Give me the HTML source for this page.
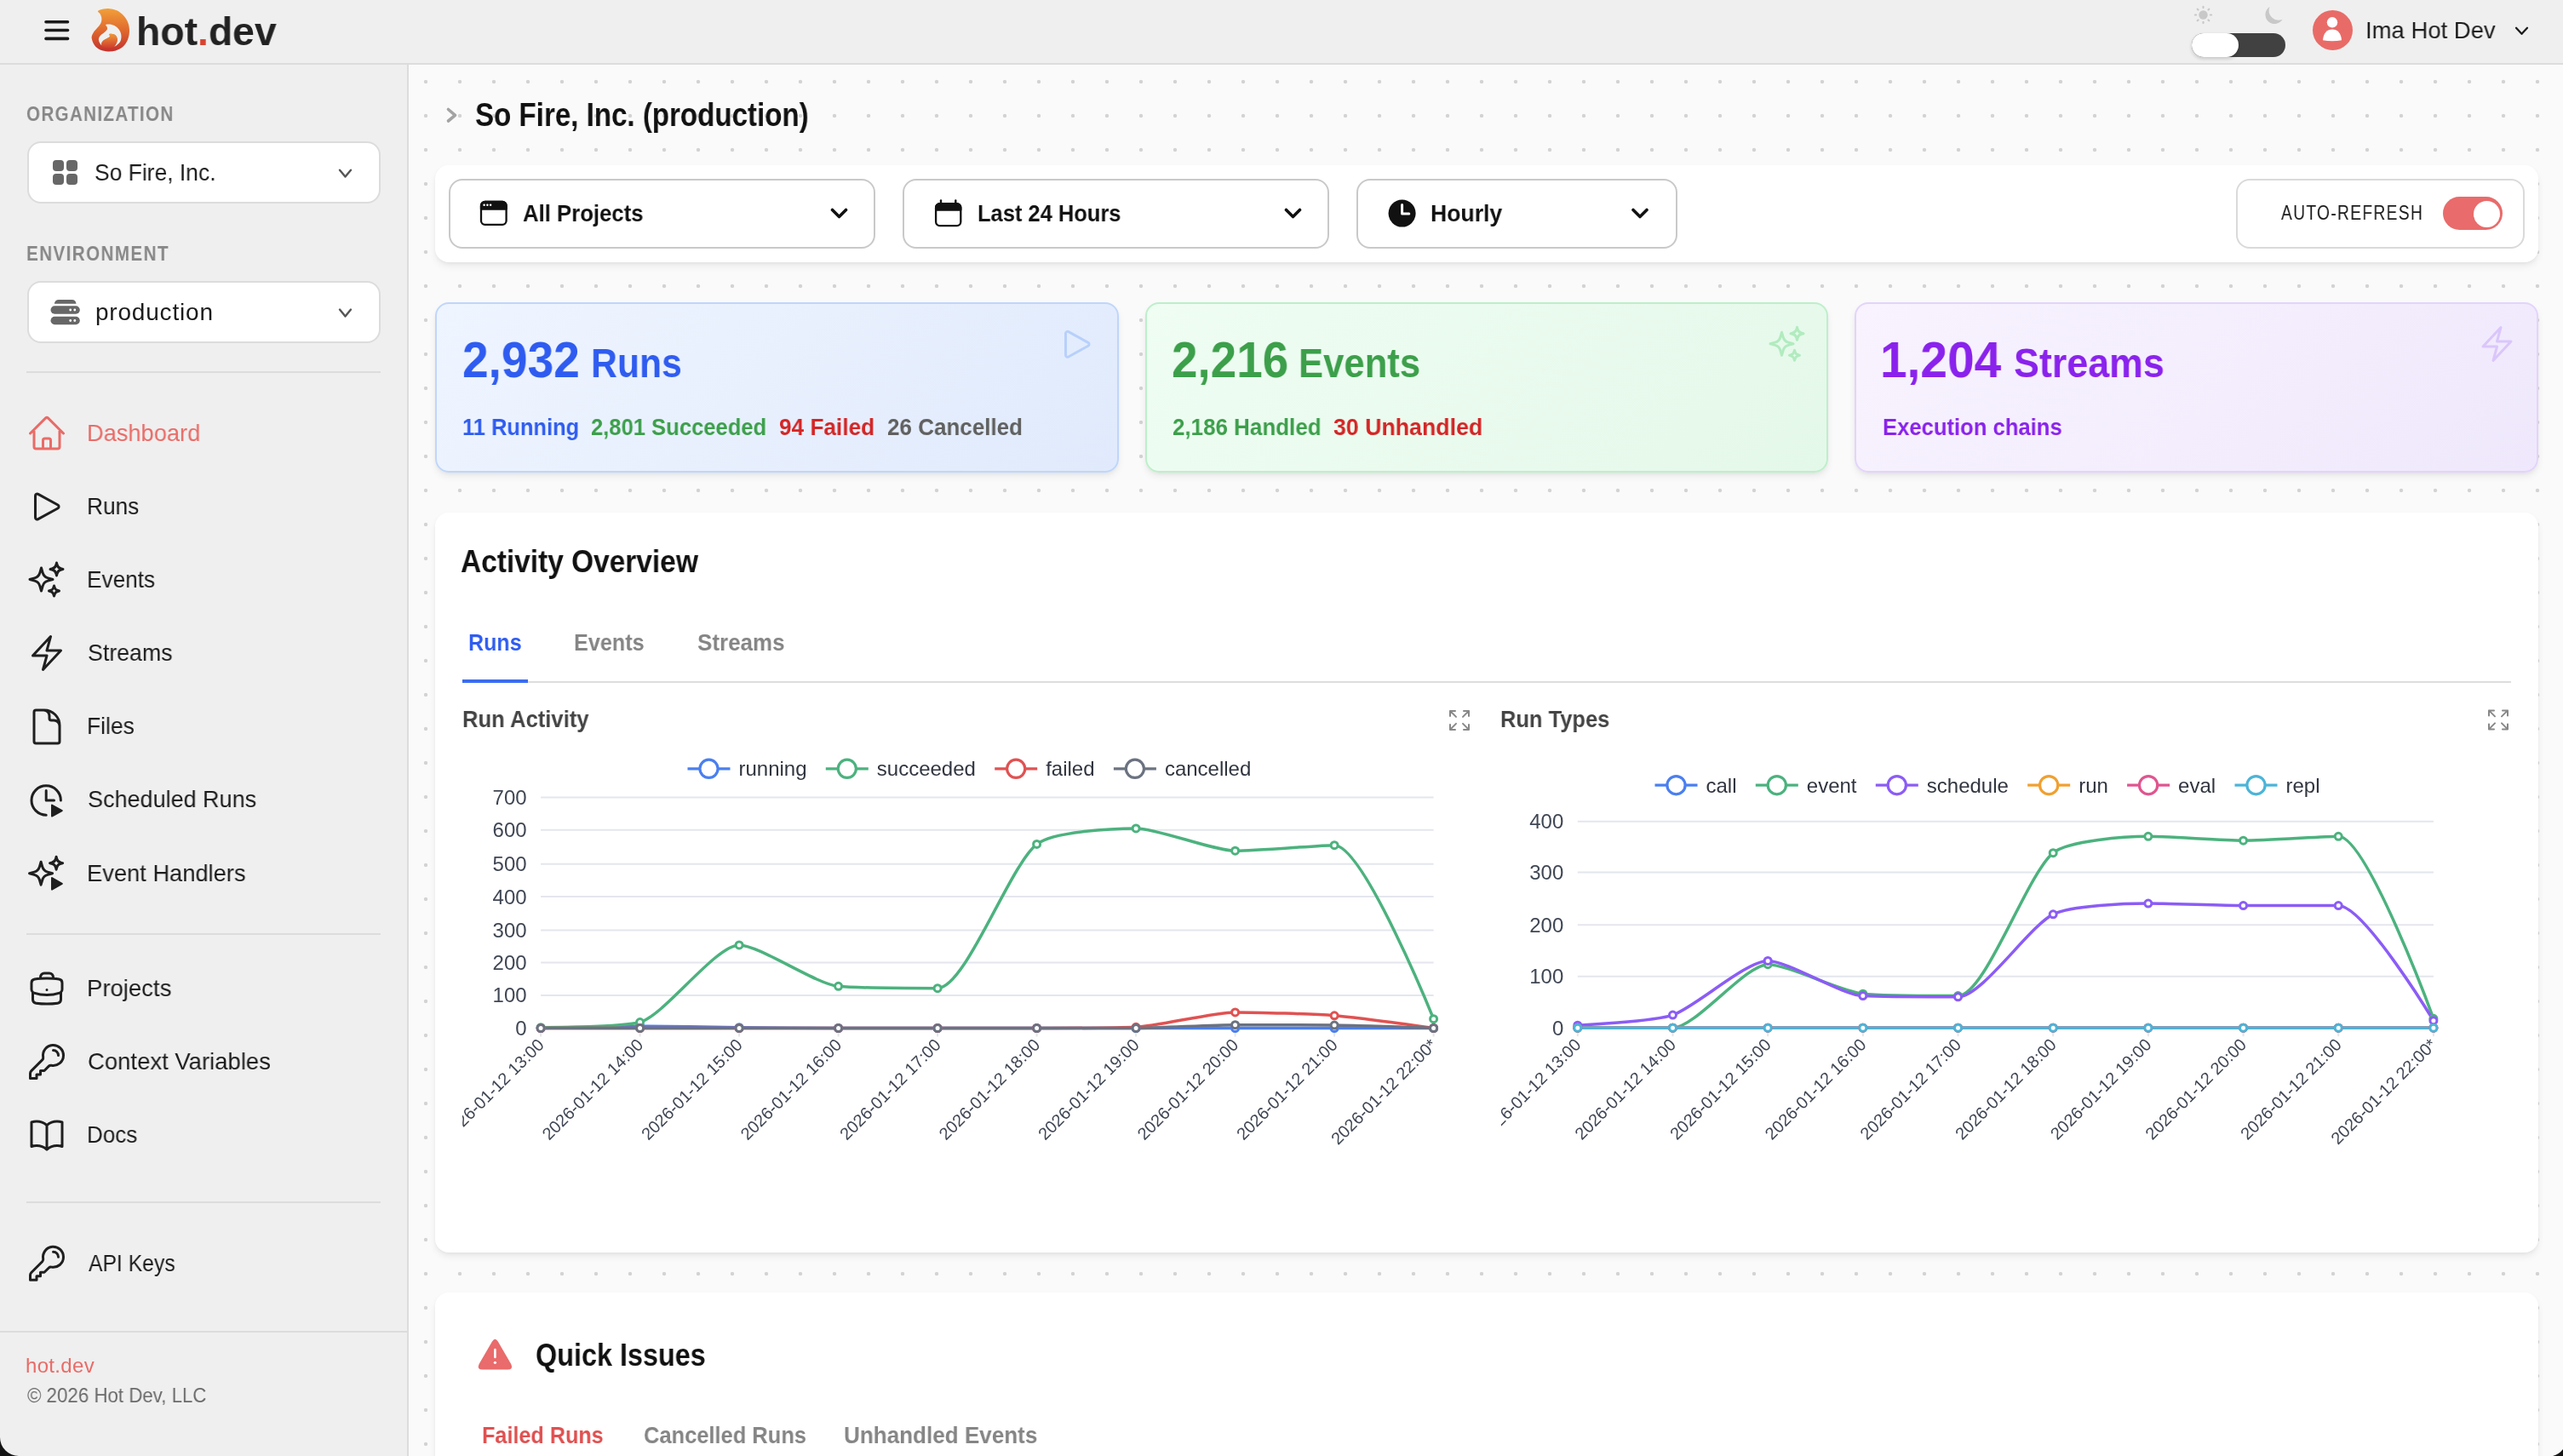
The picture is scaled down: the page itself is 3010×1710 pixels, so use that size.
<!DOCTYPE html>
<html><head><meta charset="utf-8"><title>hot.dev dashboard</title>
<style>
html,body{margin:0;padding:0;width:3010px;height:1710px;overflow:hidden;background:#f8f8f8;font-family:'Liberation Sans', sans-serif;}
.a{position:absolute;box-sizing:border-box;}
.t{position:absolute;white-space:nowrap;font-family:'Liberation Sans', sans-serif;will-change:transform;-webkit-font-smoothing:antialiased;}

#hdr{left:0;top:0;width:3010px;height:76px;background:#efefef;border-bottom:2px solid #dcdcdc;}
#side{left:0;top:76px;width:480px;height:1634px;background:#efefef;border-right:2px solid #dcdcdc;}
#main{left:480px;top:76px;width:2530px;height:1634px;background-color:#fafafa;
  background-image:radial-gradient(circle at 20px 20px,#d3d3d3 0,#d3d3d3 1.8px,rgba(211,211,211,0) 2.6px);background-size:40px 40px;}
.sel{background:#fff;border:2px solid #dcdcdc;border-radius:16px;}
.div{background:#dcdcdc;height:2px;}
.card{background:#fff;border-radius:16px;box-shadow:0 5px 10px -1px rgba(0,0,0,0.075),0 2px 4px -1px rgba(0,0,0,0.05);}
.tsel{background:#fff;border:2px solid #c9c9c9;border-radius:16px;}
.stat{border-radius:16px;border:2px solid;box-shadow:0 5px 10px -1px rgba(0,0,0,0.075),0 2px 4px -1px rgba(0,0,0,0.05);}

</style></head><body>
<div class="a" id="hdr"></div>
<div class="a" id="side"></div>
<div class="a" id="main"></div>
<div class="a sel" style="left:32px;top:166px;width:415px;height:73px;"></div>
<div class="a sel" style="left:32px;top:330px;width:415px;height:73px;"></div>
<div class="a div" style="left:31px;top:436px;width:416px;height:2px;"></div>
<div class="a div" style="left:31px;top:1096px;width:416px;height:2px;"></div>
<div class="a div" style="left:31px;top:1411px;width:416px;height:2px;"></div>
<div class="a " style="left:0px;top:1563px;width:478px;height:2px;background:#dcdcdc"></div>
<div class="a card" style="left:511px;top:194px;width:2470px;height:114px;"></div>
<div class="a tsel" style="left:527px;top:210px;width:501px;height:82px;"></div>
<div class="a tsel" style="left:1060px;top:210px;width:501px;height:82px;"></div>
<div class="a tsel" style="left:1593px;top:210px;width:377px;height:82px;"></div>
<div class="a tsel" style="left:2626px;top:210px;width:339px;height:82px;border-color:#dadada"></div>
<div class="a " style="left:2869px;top:231px;width:70px;height:39px;background:#e96b6b;border-radius:20px"></div>
<div class="a " style="left:2904.5px;top:235.5px;width:31.0px;height:31.0px;background:#fff;border-radius:50%"></div>
<div class="a stat" style="left:511px;top:355px;width:803px;height:200px;background:linear-gradient(135deg,#eff5ff 0%,#e0eafc 100%);border-color:#bfd6fb"></div>
<div class="a stat" style="left:1345px;top:355px;width:802px;height:200px;background:linear-gradient(135deg,#effdf3 0%,#e4f8e9 100%);border-color:#bdefca"></div>
<div class="a stat" style="left:2178px;top:355px;width:803px;height:200px;background:linear-gradient(135deg,#f8f3fe 0%,#efe8fc 100%);border-color:#e3d3fc"></div>
<div class="a card" style="left:511px;top:602px;width:2470px;height:869px;"></div>
<div class="a " style="left:543px;top:800px;width:2406px;height:2px;background:#dddddd"></div>
<div class="a " style="left:543px;top:798px;width:77px;height:4px;background:#3b6cf0"></div>
<div class="a card" style="left:511px;top:1518px;width:2470px;height:242px;"></div>
<div class="a " style="left:2574px;top:39px;width:110px;height:28px;background:#414141;border-radius:14px"></div>
<div class="a " style="left:2574px;top:39px;width:55px;height:28px;background:#fff;border-radius:14px;box-shadow:0 2px 4px rgba(0,0,0,0.18)"></div>
<div class="a " style="left:2716px;top:12px;width:47px;height:47px;background:#e96b67;border-radius:50%"></div>
<div class=t style="left:160.4px;top:13px;font-size:47px;line-height:47px;font-weight:700;color:#222222;letter-spacing:0.00px;transform:scaleX(0.9854);transform-origin:0 0;">hot<span style="color:#d8432f">.</span>dev</div>
<div class=t style="left:2777.6px;top:22px;font-size:28px;line-height:28px;font-weight:400;color:#1c1c1c;letter-spacing:0.00px;transform:scaleX(0.9817);transform-origin:0 0;">Ima Hot Dev</div>
<div class=t style="left:31.1px;top:122px;font-size:24px;line-height:24px;font-weight:700;color:#878787;letter-spacing:1.52px;transform:scaleX(0.8600);transform-origin:0 0;">ORGANIZATION</div>
<div class=t style="left:111.4px;top:189px;font-size:28px;line-height:28px;font-weight:400;color:#1c1c1c;letter-spacing:0.00px;transform:scaleX(0.9439);transform-origin:0 0;">So Fire, Inc.</div>
<div class=t style="left:30.7px;top:286px;font-size:24px;line-height:24px;font-weight:700;color:#878787;letter-spacing:1.62px;transform:scaleX(0.8600);transform-origin:0 0;">ENVIRONMENT</div>
<div class=t style="left:111.6px;top:353px;font-size:28px;line-height:28px;font-weight:400;color:#1c1c1c;letter-spacing:0.80px;">production</div>
<div class=t style="left:102.4px;top:495px;font-size:28px;line-height:28px;font-weight:400;color:#e96b67;letter-spacing:0.00px;transform:scaleX(0.9729);transform-origin:0 0;">Dashboard</div>
<div class=t style="left:102.4px;top:581px;font-size:28px;line-height:28px;font-weight:400;color:#1c1c1c;letter-spacing:0.00px;transform:scaleX(0.9387);transform-origin:0 0;">Runs</div>
<div class=t style="left:102.4px;top:667px;font-size:28px;line-height:28px;font-weight:400;color:#1c1c1c;letter-spacing:0.00px;transform:scaleX(0.9361);transform-origin:0 0;">Events</div>
<div class=t style="left:103.3px;top:753px;font-size:28px;line-height:28px;font-weight:400;color:#1c1c1c;letter-spacing:0.00px;transform:scaleX(0.9549);transform-origin:0 0;">Streams</div>
<div class=t style="left:102.4px;top:839px;font-size:28px;line-height:28px;font-weight:400;color:#1c1c1c;letter-spacing:0.00px;transform:scaleX(0.9464);transform-origin:0 0;">Files</div>
<div class=t style="left:103.3px;top:925px;font-size:28px;line-height:28px;font-weight:400;color:#1c1c1c;letter-spacing:0.00px;transform:scaleX(0.9642);transform-origin:0 0;">Scheduled Runs</div>
<div class=t style="left:102.4px;top:1012px;font-size:28px;line-height:28px;font-weight:400;color:#1c1c1c;letter-spacing:0.00px;transform:scaleX(0.9746);transform-origin:0 0;">Event Handlers</div>
<div class=t style="left:102.3px;top:1147px;font-size:28px;line-height:28px;font-weight:400;color:#1c1c1c;letter-spacing:0.00px;transform:scaleX(0.9827);transform-origin:0 0;">Projects</div>
<div class=t style="left:103.3px;top:1233px;font-size:28px;line-height:28px;font-weight:400;color:#1c1c1c;letter-spacing:0.00px;transform:scaleX(0.9816);transform-origin:0 0;">Context Variables</div>
<div class=t style="left:102.4px;top:1319px;font-size:28px;line-height:28px;font-weight:400;color:#1c1c1c;letter-spacing:0.00px;transform:scaleX(0.9295);transform-origin:0 0;">Docs</div>
<div class=t style="left:104.3px;top:1470px;font-size:28px;line-height:28px;font-weight:400;color:#1c1c1c;letter-spacing:0.00px;transform:scaleX(0.8825);transform-origin:0 0;">API Keys</div>
<div class=t style="left:30.0px;top:1592px;font-size:24px;line-height:24px;font-weight:400;color:#e96b67;letter-spacing:0.33px;">hot.dev</div>
<div class=t style="left:32.0px;top:1627px;font-size:24px;line-height:24px;font-weight:400;color:#6a6a6a;letter-spacing:0.00px;transform:scaleX(0.9283);transform-origin:0 0;">© 2026 Hot Dev, LLC</div>
<div class=t style="left:557.7px;top:116px;font-size:38px;line-height:38px;font-weight:700;color:#111111;letter-spacing:0.00px;transform:scaleX(0.8711);transform-origin:0 0;">So Fire, Inc. (production)</div>
<div class=t style="left:614.1px;top:237px;font-size:28px;line-height:28px;font-weight:700;color:#111111;letter-spacing:0.00px;transform:scaleX(0.9184);transform-origin:0 0;">All Projects</div>
<div class=t style="left:1148.2px;top:237px;font-size:28px;line-height:28px;font-weight:700;color:#111111;letter-spacing:0.00px;transform:scaleX(0.9099);transform-origin:0 0;">Last 24 Hours</div>
<div class=t style="left:1680.4px;top:237px;font-size:28px;line-height:28px;font-weight:700;color:#111111;letter-spacing:0.00px;transform:scaleX(0.9500);transform-origin:0 0;">Hourly</div>
<div class=t style="left:2679.0px;top:238px;font-size:24px;line-height:24px;font-weight:400;color:#1a1a1a;letter-spacing:1.67px;transform:scaleX(0.8000);transform-origin:0 0;">AUTO-REFRESH</div>
<div class=t style="left:542.8px;top:393px;font-size:60px;line-height:60px;font-weight:700;color:#2f5cf0;letter-spacing:0.00px;transform:scaleX(0.9178);transform-origin:0 0;">2,932</div>
<div class=t style="left:693.7px;top:403px;font-size:48px;line-height:48px;font-weight:700;color:#2f5cf0;letter-spacing:0.00px;transform:scaleX(0.8904);transform-origin:0 0;">Runs</div>
<div class=t style="left:543.2px;top:488px;font-size:28px;line-height:28px;font-weight:700;color:#2f5cf0;letter-spacing:0.00px;transform:scaleX(0.9088);transform-origin:0 0;">11 Running</div>
<div class=t style="left:693.6px;top:488px;font-size:28px;line-height:28px;font-weight:700;color:#3c9f4a;letter-spacing:0.00px;transform:scaleX(0.9135);transform-origin:0 0;">2,801 Succeeded</div>
<div class=t style="left:915.1px;top:488px;font-size:28px;line-height:28px;font-weight:700;color:#d42525;letter-spacing:0.00px;transform:scaleX(0.9350);transform-origin:0 0;">94 Failed</div>
<div class=t style="left:1041.7px;top:488px;font-size:28px;line-height:28px;font-weight:700;color:#606060;letter-spacing:0.00px;transform:scaleX(0.9286);transform-origin:0 0;">26 Cancelled</div>
<div class=t style="left:1376.2px;top:393px;font-size:60px;line-height:60px;font-weight:700;color:#3c9f4a;letter-spacing:0.00px;transform:scaleX(0.9137);transform-origin:0 0;">2,216</div>
<div class=t style="left:1525.3px;top:403px;font-size:48px;line-height:48px;font-weight:700;color:#3c9f4a;letter-spacing:0.00px;transform:scaleX(0.9085);transform-origin:0 0;">Events</div>
<div class=t style="left:1377.1px;top:488px;font-size:28px;line-height:28px;font-weight:700;color:#3c9f4a;letter-spacing:0.00px;transform:scaleX(0.9269);transform-origin:0 0;">2,186 Handled</div>
<div class=t style="left:1565.9px;top:488px;font-size:28px;line-height:28px;font-weight:700;color:#d42525;letter-spacing:0.00px;transform:scaleX(0.9541);transform-origin:0 0;">30 Unhandled</div>
<div class=t style="left:2208.2px;top:393px;font-size:60px;line-height:60px;font-weight:700;color:#8a22ec;letter-spacing:0.00px;transform:scaleX(0.9473);transform-origin:0 0;">1,204</div>
<div class=t style="left:2364.9px;top:403px;font-size:48px;line-height:48px;font-weight:700;color:#8a22ec;letter-spacing:0.00px;transform:scaleX(0.9332);transform-origin:0 0;">Streams</div>
<div class=t style="left:2211.0px;top:488px;font-size:28px;line-height:28px;font-weight:700;color:#8a22ec;letter-spacing:0.00px;transform:scaleX(0.9150);transform-origin:0 0;">Execution chains</div>
<div class=t style="left:541.3px;top:642px;font-size:36px;line-height:36px;font-weight:700;color:#111111;letter-spacing:0.00px;transform:scaleX(0.9291);transform-origin:0 0;">Activity Overview</div>
<div class=t style="left:549.9px;top:741px;font-size:28px;line-height:28px;font-weight:700;color:#2f5cf0;letter-spacing:0.00px;transform:scaleX(0.8940);transform-origin:0 0;">Runs</div>
<div class=t style="left:674.4px;top:741px;font-size:28px;line-height:28px;font-weight:700;color:#858585;letter-spacing:0.00px;transform:scaleX(0.9000);transform-origin:0 0;">Events</div>
<div class=t style="left:818.9px;top:741px;font-size:28px;line-height:28px;font-weight:700;color:#858585;letter-spacing:0.00px;transform:scaleX(0.9275);transform-origin:0 0;">Streams</div>
<div class=t style="left:542.5px;top:831px;font-size:28px;line-height:28px;font-weight:700;color:#444444;letter-spacing:0.00px;transform:scaleX(0.9150);transform-origin:0 0;">Run Activity</div>
<div class=t style="left:1761.5px;top:831px;font-size:28px;line-height:28px;font-weight:700;color:#444444;letter-spacing:0.00px;transform:scaleX(0.9094);transform-origin:0 0;">Run Types</div>
<div class=t style="left:629.0px;top:1574px;font-size:36px;line-height:36px;font-weight:700;color:#111111;letter-spacing:0.00px;transform:scaleX(0.8995);transform-origin:0 0;">Quick Issues</div>
<div class=t style="left:565.9px;top:1672px;font-size:28px;line-height:28px;font-weight:700;color:#e05050;letter-spacing:0.00px;transform:scaleX(0.8994);transform-origin:0 0;">Failed Runs</div>
<div class=t style="left:755.5px;top:1672px;font-size:28px;line-height:28px;font-weight:700;color:#858585;letter-spacing:0.00px;transform:scaleX(0.9091);transform-origin:0 0;">Cancelled Runs</div>
<div class=t style="left:991.4px;top:1672px;font-size:28px;line-height:28px;font-weight:700;color:#858585;letter-spacing:0.00px;transform:scaleX(0.9307);transform-origin:0 0;">Unhandled Events</div>
<svg class="a" style="left:0;top:0;will-change:transform" width="3010" height="1710" viewBox="0 0 3010 1710">
<path transform="translate(31,485) scale(2.0)" d="m2.25 12 8.954-8.955c.44-.439 1.152-.439 1.591 0L21.75 12M4.5 9.75v10.125c0 .621.504 1.125 1.125 1.125H9.75v-4.875c0-.621.504-1.125 1.125-1.125h2.25c.621 0 1.125.504 1.125 1.125V21h4.125c.621 0 1.125-.504 1.125-1.125V9.75M8.25 21h8.25" fill="none" stroke="#e96b67" stroke-width="1.5" stroke-linecap="round" stroke-linejoin="round"/>
<path transform="translate(31,571) scale(2.0)" d="M5.25 5.653c0-.856.917-1.398 1.667-.986l11.54 6.347a1.125 1.125 0 0 1 0 1.972l-11.54 6.347a1.125 1.125 0 0 1-1.667-.986V5.653Z" fill="none" stroke="#1f1f1f" stroke-width="1.5" stroke-linecap="round" stroke-linejoin="round"/>
<path transform="translate(30.5,656.5) scale(2.0)" d="M9.813 15.904 9 18.75l-.813-2.846a4.5 4.5 0 0 0-3.09-3.09L2.25 12l2.846-.813a4.5 4.5 0 0 0 3.09-3.09L9 5.25l.813 2.846a4.5 4.5 0 0 0 3.09 3.09L15.75 12l-2.846.813a4.5 4.5 0 0 0-3.09 3.09ZM18.259 8.715 18 9.75l-.259-1.035a3.375 3.375 0 0 0-2.455-2.456L14.25 6l1.036-.259a3.375 3.375 0 0 0 2.455-2.456L18 2.25l.259 1.035a3.375 3.375 0 0 0 2.456 2.456L21.75 6l-1.035.259a3.375 3.375 0 0 0-2.456 2.456ZM16.894 20.567 16.5 21.75l-.394-1.183a2.25 2.25 0 0 0-1.423-1.423L13.5 18.75l1.183-.394a2.25 2.25 0 0 0 1.423-1.423l.394-1.183.394 1.183a2.25 2.25 0 0 0 1.423 1.423l1.183.394-1.183.394a2.25 2.25 0 0 0-1.423 1.423Z" fill="none" stroke="#1f1f1f" stroke-width="1.5" stroke-linecap="round" stroke-linejoin="round"/>
<path transform="translate(31,743) scale(2.0)" d="m3.75 13.5 10.5-11.25L12 10.5h8.25L9.75 21.75 12 13.5H3.75Z" fill="none" stroke="#1f1f1f" stroke-width="1.5" stroke-linecap="round" stroke-linejoin="round"/>
<path transform="translate(31,829.5) scale(2.0)" d="M19.5 14.25v-2.625a3.375 3.375 0 0 0-3.375-3.375h-1.5A1.125 1.125 0 0 1 13.5 7.125v-1.5a3.375 3.375 0 0 0-3.375-3.375H8.25m2.25 0H5.625c-.621 0-1.125.504-1.125 1.125v17.25c0 .621.504 1.125 1.125 1.125h12.75c.621 0 1.125-.504 1.125-1.125V11.25a9 9 0 0 0-9-9Z" fill="none" stroke="#1f1f1f" stroke-width="1.5" stroke-linecap="round" stroke-linejoin="round"/>
<path d="M71.4 940 A17.2 17.2 0 1 0 54.2 957.2" fill="none" stroke="#1f1f1f" stroke-width="3" stroke-linecap="round"/>
<path d="M54.2 928.5 V940 H63.5" fill="none" stroke="#1f1f1f" stroke-width="3" stroke-linecap="round" stroke-linejoin="round"/>
<path d="M61 945.5 L72.8 952.1 L61 958.5 Z" fill="#1f1f1f" stroke="#1f1f1f" stroke-width="2" stroke-linejoin="round"/>
<path transform="translate(30.1,1001.7) scale(2.0)" d="M9.813 15.904 9 18.75l-.813-2.846a4.5 4.5 0 0 0-3.09-3.09L2.25 12l2.846-.813a4.5 4.5 0 0 0 3.09-3.09L9 5.25l.813 2.846a4.5 4.5 0 0 0 3.09 3.09L15.75 12l-2.846.813a4.5 4.5 0 0 0-3.09 3.09ZM18.259 8.715 18 9.75l-.259-1.035a3.375 3.375 0 0 0-2.455-2.456L14.25 6l1.036-.259a3.375 3.375 0 0 0 2.455-2.456L18 2.25l.259 1.035a3.375 3.375 0 0 0 2.456 2.456L21.75 6l-1.035.259a3.375 3.375 0 0 0-2.456 2.456Z" fill="none" stroke="#1f1f1f" stroke-width="1.5" stroke-linecap="round" stroke-linejoin="round"/>
<path d="M61 1031 L72.8 1037.9 L61 1044.6 Z" fill="#1f1f1f" stroke="#1f1f1f" stroke-width="2" stroke-linejoin="round"/>
<path transform="translate(31,1137) scale(2.0)" d="M20.25 14.15v4.25c0 1.094-.787 2.036-1.872 2.18-2.087.277-4.216.42-6.378.42s-4.291-.143-6.378-.42c-1.085-.144-1.872-1.086-1.872-2.18v-4.25m16.5 0a2.18 2.18 0 0 0 .75-1.661V8.706c0-1.081-.768-2.015-1.837-2.175a48.114 48.114 0 0 0-3.413-.387m4.5 8.006c-.194.165-.42.295-.673.38A23.978 23.978 0 0 1 12 15.75c-2.648 0-5.195-.429-7.577-1.22a2.016 2.016 0 0 1-.673-.38m0 0A2.18 2.18 0 0 1 3 12.489V8.706c0-1.081.768-2.015 1.837-2.175a48.111 48.111 0 0 1 3.413-.387m7.5 0V5.25A2.25 2.25 0 0 0 13.5 3h-3a2.25 2.25 0 0 0-2.25 2.25v.894m7.5 0a48.667 48.667 0 0 0-7.5 0M12 12.75h.008v.008H12v-.008Z" fill="none" stroke="#1f1f1f" stroke-width="1.5" stroke-linecap="round" stroke-linejoin="round"/>
<path transform="translate(31,1223) scale(2.0)" d="M15.75 5.25a3 3 0 0 1 3 3m3 0a6 6 0 0 1-7.029 5.912c-.563-.097-1.159.026-1.563.43L10.5 17.25H8.25v2.25H6v2.25H2.25v-2.818c0-.597.237-1.17.659-1.591l6.499-6.499c.404-.404.527-1 .43-1.563A6 6 0 1 1 21.75 8.25Z" fill="none" stroke="#1f1f1f" stroke-width="1.5" stroke-linecap="round" stroke-linejoin="round"/>
<path transform="translate(31,1309.5) scale(2.0)" d="M12 6.042A8.967 8.967 0 0 0 6 3.75c-1.052 0-2.062.18-3 .512v14.25A8.987 8.987 0 0 1 6 18c2.305 0 4.408.867 6 2.292m0-14.25a8.966 8.966 0 0 1 6-2.292c1.052 0 2.062.18 3 .512v14.25A8.987 8.987 0 0 0 18 18a8.967 8.967 0 0 0-6 2.292m0-14.25v14.25" fill="none" stroke="#1f1f1f" stroke-width="1.5" stroke-linecap="round" stroke-linejoin="round"/>
<path transform="translate(31,1459.8) scale(2.0)" d="M15.75 5.25a3 3 0 0 1 3 3m3 0a6 6 0 0 1-7.029 5.912c-.563-.097-1.159.026-1.563.43L10.5 17.25H8.25v2.25H6v2.25H2.25v-2.818c0-.597.237-1.17.659-1.591l6.499-6.499c.404-.404.527-1 .43-1.563A6 6 0 1 1 21.75 8.25Z" fill="none" stroke="#1f1f1f" stroke-width="1.5" stroke-linecap="round" stroke-linejoin="round"/>
<line x1="54" y1="25.75" x2="79.5" y2="25.75" stroke="#1a1a1a" stroke-width="3.6" stroke-linecap="round"/>
<line x1="54" y1="35.5" x2="79.5" y2="35.5" stroke="#1a1a1a" stroke-width="3.6" stroke-linecap="round"/>
<line x1="54" y1="45.4" x2="79.5" y2="45.4" stroke="#1a1a1a" stroke-width="3.6" stroke-linecap="round"/>
<g fill="#c8c8c8">
<circle cx="2587.5" cy="17.5" r="5.2"/>
<line x1="2587.50" y1="9.10" x2="2587.50" y2="7.90" stroke="#c8c8c8" stroke-width="2.2" stroke-linecap="round"/>
<line x1="2593.44" y1="11.56" x2="2594.29" y2="10.71" stroke="#c8c8c8" stroke-width="2.2" stroke-linecap="round"/>
<line x1="2595.90" y1="17.50" x2="2597.10" y2="17.50" stroke="#c8c8c8" stroke-width="2.2" stroke-linecap="round"/>
<line x1="2593.44" y1="23.44" x2="2594.29" y2="24.29" stroke="#c8c8c8" stroke-width="2.2" stroke-linecap="round"/>
<line x1="2587.50" y1="25.90" x2="2587.50" y2="27.10" stroke="#c8c8c8" stroke-width="2.2" stroke-linecap="round"/>
<line x1="2581.56" y1="23.44" x2="2580.71" y2="24.29" stroke="#c8c8c8" stroke-width="2.2" stroke-linecap="round"/>
<line x1="2579.10" y1="17.50" x2="2577.90" y2="17.50" stroke="#c8c8c8" stroke-width="2.2" stroke-linecap="round"/>
<line x1="2581.56" y1="11.56" x2="2580.71" y2="10.71" stroke="#c8c8c8" stroke-width="2.2" stroke-linecap="round"/>
</g>
<path d="M2665.5 8.1 A10.8 10.8 0 1 0 2680.5 22.8 A11.4 11.4 0 0 1 2665.5 8.1 Z" fill="#c8c8c8"/>
<circle cx="2739" cy="26.3" r="6.2" fill="#fff"/>
<path d="M2728 47.3 C2728.5 39 2733 34.5 2739 34.5 C2745 34.5 2749.5 39 2750 47.3 C2743 48.6 2735 48.6 2728 47.3 Z" fill="#fff"/>
<path d="M2955 32.8 L2961.5 39.8 L2968 32.8" fill="none" stroke="#1c1c1c" stroke-width="2.3" stroke-linecap="round" stroke-linejoin="round"/>
<rect x="62" y="188" width="13" height="13" rx="4" fill="#676767"/>
<rect x="78" y="188" width="13" height="13" rx="4" fill="#676767"/>
<rect x="62" y="204" width="13" height="13" rx="4" fill="#676767"/>
<rect x="78" y="204" width="13" height="13" rx="4" fill="#676767"/>
<path d="M63.8 356.7 Q64.5 352 69 352 H84.5 Q89 352 89.5 356.7 Z" fill="#676767"/>
<rect x="59.5" y="359.3" width="34.3" height="9.4" rx="4.7" fill="#676767"/>
<rect x="59.5" y="371.8" width="34.3" height="9.4" rx="4.7" fill="#676767"/>
<circle cx="82.7" cy="364" r="1.4" fill="#fff"/><circle cx="87.8" cy="364" r="1.4" fill="#fff"/>
<circle cx="82.7" cy="376.5" r="1.4" fill="#fff"/><circle cx="87.8" cy="376.5" r="1.4" fill="#fff"/>
<path d="M399 199.70000000000002 L405.5 207.60000000000002 L412 199.70000000000002" fill="none" stroke="#555" stroke-width="2.4" stroke-linecap="round" stroke-linejoin="round"/>
<path d="M399 363.59999999999997 L405.5 371.5 L412 363.59999999999997" fill="none" stroke="#555" stroke-width="2.4" stroke-linecap="round" stroke-linejoin="round"/>
<path d="M526.5 128.5 L534.5 135.3 L526.5 142" fill="none" stroke="#a3a3a3" stroke-width="3.6" stroke-linecap="round" stroke-linejoin="round"/>
<rect x="565" y="237" width="29.6" height="26.8" rx="4.5" fill="none" stroke="#111111" stroke-width="2.3"/>
<path d="M565 245.5 V241.5 A4.5 4.5 0 0 1 569.5 237 H590 A4.5 4.5 0 0 1 594.6 241.5 V245.5 Z" fill="#111111" stroke="#111111" stroke-width="2.3" stroke-linejoin="round"/>
<circle cx="568.6" cy="240.8" r="1.25" fill="#fff"/>
<circle cx="572.4" cy="240.8" r="1.25" fill="#fff"/>
<circle cx="576.1" cy="240.8" r="1.25" fill="#fff"/>
<rect x="1099.1" y="239.2" width="29.2" height="25.9" rx="4.5" fill="none" stroke="#111111" stroke-width="2.3"/>
<path d="M1099.1 246.6 V243.7 A4.5 4.5 0 0 1 1103.6 239.2 H1123.8 A4.5 4.5 0 0 1 1128.3 243.7 V246.6 Z" fill="#111111" stroke="#111111" stroke-width="2.3" stroke-linejoin="round"/>
<line x1="1105" y1="235.5" x2="1105" y2="240" stroke="#111111" stroke-width="2.4" stroke-linecap="round"/>
<line x1="1122.3" y1="235.5" x2="1122.3" y2="240" stroke="#111111" stroke-width="2.4" stroke-linecap="round"/>
<circle cx="1646.6" cy="250.6" r="16" fill="#111111"/>
<path d="M1646.6 240.5 V251 H1654.8" fill="none" stroke="#fff" stroke-width="3" stroke-linecap="round" stroke-linejoin="round"/>
<path d="M977.5 246.5 L985.5 254.5 L993.5 246.5" fill="none" stroke="#111111" stroke-width="3.6" stroke-linecap="round" stroke-linejoin="round"/>
<path d="M1510.5 246.5 L1518.5 254.5 L1526.5 246.5" fill="none" stroke="#111111" stroke-width="3.6" stroke-linecap="round" stroke-linejoin="round"/>
<path d="M1918 246.5 L1926 254.5 L1934 246.5" fill="none" stroke="#111111" stroke-width="3.6" stroke-linecap="round" stroke-linejoin="round"/>
<path transform="translate(1241,380.3) scale(2.0)" d="M5.25 5.653c0-.856.917-1.398 1.667-.986l11.54 6.347a1.125 1.125 0 0 1 0 1.972l-11.54 6.347a1.125 1.125 0 0 1-1.667-.986V5.653Z" fill="none" stroke="#b8d0fb" stroke-width="1.5" stroke-linecap="round" stroke-linejoin="round"/>
<path transform="translate(2074.5,379.8) scale(2.0)" d="M9.813 15.904 9 18.75l-.813-2.846a4.5 4.5 0 0 0-3.09-3.09L2.25 12l2.846-.813a4.5 4.5 0 0 0 3.09-3.09L9 5.25l.813 2.846a4.5 4.5 0 0 0 3.09 3.09L15.75 12l-2.846.813a4.5 4.5 0 0 0-3.09 3.09ZM18.259 8.715 18 9.75l-.259-1.035a3.375 3.375 0 0 0-2.455-2.456L14.25 6l1.036-.259a3.375 3.375 0 0 0 2.455-2.456L18 2.25l.259 1.035a3.375 3.375 0 0 0 2.456 2.456L21.75 6l-1.035.259a3.375 3.375 0 0 0-2.456 2.456ZM16.894 20.567 16.5 21.75l-.394-1.183a2.25 2.25 0 0 0-1.423-1.423L13.5 18.75l1.183-.394a2.25 2.25 0 0 0 1.423-1.423l.394-1.183.394 1.183a2.25 2.25 0 0 0 1.423 1.423l1.183.394-1.183.394a2.25 2.25 0 0 0-1.423 1.423Z" fill="none" stroke="#b1ebbf" stroke-width="1.5" stroke-linecap="round" stroke-linejoin="round"/>
<path transform="translate(2908.5,380) scale(2.0)" d="m3.75 13.5 10.5-11.25L12 10.5h8.25L9.75 21.75 12 13.5H3.75Z" fill="none" stroke="#dac6fb" stroke-width="1.5" stroke-linecap="round" stroke-linejoin="round"/>
<path transform="translate(1698,829.9) scale(1.3333333333333333)" d="M3.75 3.75v4.5m0-4.5h4.5m-4.5 0L9 9M3.75 20.25v-4.5m0 4.5h4.5m-4.5 0L9 15M20.25 3.75h-4.5m4.5 0v4.5m0-4.5L15 9m5.25 11.25h-4.5m4.5 0v-4.5m0 4.5L15 15" fill="none" stroke="#888888" stroke-width="1.5" stroke-linecap="round" stroke-linejoin="round"/>
<path transform="translate(2918,829.4) scale(1.3333333333333333)" d="M3.75 3.75v4.5m0-4.5h4.5m-4.5 0L9 9M3.75 20.25v-4.5m0 4.5h4.5m-4.5 0L9 15M20.25 3.75h-4.5m4.5 0v4.5m0-4.5L15 9m5.25 11.25h-4.5m4.5 0v-4.5m0 4.5L15 15" fill="none" stroke="#888888" stroke-width="1.5" stroke-linecap="round" stroke-linejoin="round"/>
<path d="M578 1575.5 Q581.4 1569.8 584.8 1575.5 L600.2 1602 Q603.2 1608.6 596 1608.6 H566.8 Q559.6 1608.6 562.6 1602 Z" fill="#e96b6b"/>
<line x1="581.4" y1="1585" x2="581.4" y2="1594" stroke="#fff" stroke-width="2.6" stroke-linecap="round"/>
<circle cx="581.4" cy="1600.3" r="1.6" fill="#fff"/>
<defs><linearGradient id="flame" x1="0" y1="0" x2="0" y2="1"><stop offset="0" stop-color="#f2a03a"/><stop offset="0.5" stop-color="#e06a2e"/><stop offset="1" stop-color="#c3302c"/></linearGradient><linearGradient id="flame2" x1="0" y1="0" x2="0" y2="1"><stop offset="0" stop-color="#f09a38"/><stop offset="1" stop-color="#c9382c"/></linearGradient></defs>
<path d="M115.04 13.03 C115.66 12.04 119.13 11.04 121.43 10.56 C123.73 10.08 126.10 9.81 128.84 10.15 C131.59 10.49 135.16 11.21 137.91 12.62 C140.65 14.03 143.26 16.30 145.32 18.60 C147.38 20.90 149.16 23.47 150.27 26.43 C151.38 29.38 152.03 32.95 152.00 36.31 C151.96 39.68 151.31 43.52 150.06 46.62 C148.81 49.71 146.87 52.73 144.50 54.86 C142.13 56.98 138.80 58.46 135.85 59.39 C132.89 60.32 129.80 60.56 126.78 60.42 C123.76 60.28 120.33 59.77 117.72 58.56 C115.11 57.36 112.81 55.54 111.12 53.21 C109.44 50.87 107.83 47.10 107.62 44.56 C107.42 42.01 108.82 39.89 109.89 37.96 C110.95 36.04 112.64 34.70 114.01 33.02 C115.38 31.34 117.24 29.72 118.13 27.87 C119.02 26.01 119.43 23.78 119.37 21.89 C119.30 20.00 118.44 18.01 117.72 16.54 C117.00 15.06 114.42 14.03 115.04 13.03 Z" fill="url(#flame)"/>
<path d="M124.31 28.98 C125.24 28.50 129.19 28.43 131.31 28.90 C133.44 29.36 135.43 30.41 137.08 31.78 C138.73 33.16 140.31 35.22 141.20 37.14 C142.10 39.06 142.51 41.26 142.44 43.32 C142.37 45.38 142.16 47.56 140.79 49.50 C139.42 51.44 134.82 54.87 134.20 54.94 C133.58 55.01 136.50 51.50 137.08 49.91 C137.67 48.32 137.98 46.82 137.70 45.38 C137.43 43.94 136.50 42.19 135.43 41.26 C134.37 40.33 132.48 40.02 131.31 39.82 C130.15 39.61 128.81 39.51 128.43 40.02 C128.05 40.54 129.53 42.05 129.05 42.91 C128.57 43.77 126.82 44.42 125.55 45.17 C124.28 45.93 122.46 46.58 121.43 47.44 C120.40 48.30 119.71 49.36 119.37 50.32 C119.02 51.28 119.78 53.28 119.37 53.21 C118.95 53.14 117.48 51.15 116.89 49.91 C116.31 48.68 115.73 47.10 115.86 45.79 C116.00 44.49 116.65 43.32 117.72 42.08 C118.78 40.85 120.91 39.61 122.25 38.37 C123.59 37.14 125.17 35.77 125.75 34.67 C126.34 33.57 125.99 32.73 125.75 31.78 C125.51 30.83 123.38 29.46 124.31 28.98 Z" fill="#efefef"/>
<defs><linearGradient id="flame3" gradientUnits="userSpaceOnUse" x1="0" y1="39.5" x2="0" y2="57"><stop offset="0" stop-color="#f09a38"/><stop offset="1" stop-color="#cd3a2c"/></linearGradient></defs>
<path d="M128.43 40.02 C128.91 39.49 130.56 39.70 131.73 39.94 C132.89 40.18 134.46 40.59 135.43 41.46 C136.41 42.34 137.27 43.83 137.58 45.17 C137.89 46.51 137.82 47.92 137.29 49.50 C136.76 51.08 135.81 53.48 134.40 54.65 C133.00 55.82 131.01 56.37 128.84 56.50 C126.68 56.64 123.01 56.02 121.43 55.47 C119.85 54.92 119.67 54.10 119.37 53.21 C119.06 52.31 119.19 51.08 119.57 50.12 C119.95 49.16 120.64 48.26 121.63 47.44 C122.63 46.62 124.34 45.89 125.55 45.17 C126.75 44.45 128.36 43.97 128.84 43.11 C129.32 42.25 127.95 40.55 128.43 40.02 Z" fill="url(#flame3)"/>
<defs><clipPath id="clip1"><rect x="543" y="800" width="1184" height="600"/></clipPath></defs>
<line x1="635.1" y1="1207.50" x2="1683.6" y2="1207.50" stroke="#e4e6ee" stroke-width="2"/>
<text x="618.6" y="1207.50" dy="8.5" text-anchor="end" font-size="24" fill="#404754" font-family="Liberation Sans">0</text>
<line x1="635.1" y1="1168.90" x2="1683.6" y2="1168.90" stroke="#e4e6ee" stroke-width="2"/>
<text x="618.6" y="1168.90" dy="8.5" text-anchor="end" font-size="24" fill="#404754" font-family="Liberation Sans">100</text>
<line x1="635.1" y1="1130.60" x2="1683.6" y2="1130.60" stroke="#e4e6ee" stroke-width="2"/>
<text x="618.6" y="1130.60" dy="8.5" text-anchor="end" font-size="24" fill="#404754" font-family="Liberation Sans">200</text>
<line x1="635.1" y1="1092.60" x2="1683.6" y2="1092.60" stroke="#e4e6ee" stroke-width="2"/>
<text x="618.6" y="1092.60" dy="8.5" text-anchor="end" font-size="24" fill="#404754" font-family="Liberation Sans">300</text>
<line x1="635.1" y1="1053.00" x2="1683.6" y2="1053.00" stroke="#e4e6ee" stroke-width="2"/>
<text x="618.6" y="1053.00" dy="8.5" text-anchor="end" font-size="24" fill="#404754" font-family="Liberation Sans">400</text>
<line x1="635.1" y1="1014.80" x2="1683.6" y2="1014.80" stroke="#e4e6ee" stroke-width="2"/>
<text x="618.6" y="1014.80" dy="8.5" text-anchor="end" font-size="24" fill="#404754" font-family="Liberation Sans">500</text>
<line x1="635.1" y1="974.70" x2="1683.6" y2="974.70" stroke="#e4e6ee" stroke-width="2"/>
<text x="618.6" y="974.70" dy="8.5" text-anchor="end" font-size="24" fill="#404754" font-family="Liberation Sans">600</text>
<line x1="635.1" y1="936.50" x2="1683.6" y2="936.50" stroke="#e4e6ee" stroke-width="2"/>
<text x="618.6" y="936.50" dy="8.5" text-anchor="end" font-size="24" fill="#404754" font-family="Liberation Sans">700</text>
<line x1="635.10" y1="1208.5" x2="635.10" y2="1217.5" stroke="#e6e6e6" stroke-width="2"/>
<line x1="751.60" y1="1208.5" x2="751.60" y2="1217.5" stroke="#e6e6e6" stroke-width="2"/>
<line x1="868.10" y1="1208.5" x2="868.10" y2="1217.5" stroke="#e6e6e6" stroke-width="2"/>
<line x1="984.60" y1="1208.5" x2="984.60" y2="1217.5" stroke="#e6e6e6" stroke-width="2"/>
<line x1="1101.10" y1="1208.5" x2="1101.10" y2="1217.5" stroke="#e6e6e6" stroke-width="2"/>
<line x1="1217.60" y1="1208.5" x2="1217.60" y2="1217.5" stroke="#e6e6e6" stroke-width="2"/>
<line x1="1334.10" y1="1208.5" x2="1334.10" y2="1217.5" stroke="#e6e6e6" stroke-width="2"/>
<line x1="1450.60" y1="1208.5" x2="1450.60" y2="1217.5" stroke="#e6e6e6" stroke-width="2"/>
<line x1="1567.10" y1="1208.5" x2="1567.10" y2="1217.5" stroke="#e6e6e6" stroke-width="2"/>
<line x1="1683.60" y1="1208.5" x2="1683.60" y2="1217.5" stroke="#e6e6e6" stroke-width="2"/>
<g clip-path="url(#clip1)" font-family="Liberation Sans" font-size="20" fill="#404754">
<text transform="translate(635.10,1223.5) rotate(-45)" text-anchor="end" dy="7">2026-01-12 13:00</text>
<text transform="translate(751.60,1223.5) rotate(-45)" text-anchor="end" dy="7">2026-01-12 14:00</text>
<text transform="translate(868.10,1223.5) rotate(-45)" text-anchor="end" dy="7">2026-01-12 15:00</text>
<text transform="translate(984.60,1223.5) rotate(-45)" text-anchor="end" dy="7">2026-01-12 16:00</text>
<text transform="translate(1101.10,1223.5) rotate(-45)" text-anchor="end" dy="7">2026-01-12 17:00</text>
<text transform="translate(1217.60,1223.5) rotate(-45)" text-anchor="end" dy="7">2026-01-12 18:00</text>
<text transform="translate(1334.10,1223.5) rotate(-45)" text-anchor="end" dy="7">2026-01-12 19:00</text>
<text transform="translate(1450.60,1223.5) rotate(-45)" text-anchor="end" dy="7">2026-01-12 20:00</text>
<text transform="translate(1567.10,1223.5) rotate(-45)" text-anchor="end" dy="7">2026-01-12 21:00</text>
<text transform="translate(1683.60,1223.5) rotate(-45)" text-anchor="end" dy="7">2026-01-12 22:00*</text>
</g>
<path d="M635.10 1207.50 C635.10 1207.50 725.97 1205.18 751.60 1205.18 C777.23 1205.18 842.47 1206.47 868.10 1206.73 C893.73 1206.98 958.97 1207.50 984.60 1207.50 C1010.23 1207.50 1075.47 1207.50 1101.10 1207.50 C1126.73 1207.50 1191.97 1207.50 1217.60 1207.50 C1243.23 1207.50 1308.47 1207.50 1334.10 1207.50 C1359.73 1207.50 1424.97 1207.50 1450.60 1207.50 C1476.23 1207.50 1541.47 1207.50 1567.10 1207.50 C1592.73 1207.50 1683.60 1207.50 1683.60 1207.50" fill="none" stroke="#4a7ff0" stroke-width="3.5" stroke-linejoin="round"/>
<path d="M635.10 1206.73 C635.10 1206.73 728.97 1206.73 751.60 1200.53 C780.23 1192.70 840.46 1109.94 868.10 1109.94 C891.72 1109.94 957.95 1155.82 984.60 1158.33 C1009.21 1160.66 1082.55 1160.66 1101.10 1160.66 C1133.81 1160.66 1185.04 1017.71 1217.60 991.47 C1236.30 976.40 1308.63 972.89 1334.10 972.89 C1359.89 972.89 1424.67 999.22 1450.60 999.22 C1475.93 999.22 1550.09 992.64 1567.10 992.64 C1601.35 992.64 1683.60 1196.66 1683.60 1196.66" fill="none" stroke="#4cb27e" stroke-width="3.5" stroke-linejoin="round"/>
<path d="M635.10 1207.50 C635.10 1207.50 725.97 1207.50 751.60 1207.50 C777.23 1207.50 842.47 1207.50 868.10 1207.50 C893.73 1207.50 958.97 1207.50 984.60 1207.50 C1010.23 1207.50 1075.47 1207.50 1101.10 1207.50 C1126.73 1207.50 1191.97 1207.50 1217.60 1207.50 C1243.23 1207.50 1308.61 1207.50 1334.10 1206.34 C1359.87 1205.16 1424.84 1188.92 1450.60 1188.92 C1476.10 1188.92 1541.56 1190.75 1567.10 1192.79 C1592.82 1194.84 1683.60 1207.50 1683.60 1207.50" fill="none" stroke="#e05252" stroke-width="3.5" stroke-linejoin="round"/>
<path d="M635.10 1207.50 C635.10 1207.50 725.97 1207.50 751.60 1207.50 C777.23 1207.50 842.47 1207.50 868.10 1207.50 C893.73 1207.50 958.97 1207.50 984.60 1207.50 C1010.23 1207.50 1075.47 1207.50 1101.10 1207.50 C1126.73 1207.50 1191.97 1207.50 1217.60 1207.50 C1243.23 1207.50 1308.48 1207.50 1334.10 1207.50 C1359.74 1207.50 1424.96 1203.63 1450.60 1203.63 C1476.22 1203.63 1541.48 1203.63 1567.10 1204.02 C1592.74 1204.40 1683.60 1207.50 1683.60 1207.50" fill="none" stroke="#6b7280" stroke-width="3.5" stroke-linejoin="round"/>
<circle cx="635.10" cy="1207.50" r="4" fill="#fff" stroke="#4a7ff0" stroke-width="3"/>
<circle cx="751.60" cy="1205.18" r="4" fill="#fff" stroke="#4a7ff0" stroke-width="3"/>
<circle cx="868.10" cy="1206.73" r="4" fill="#fff" stroke="#4a7ff0" stroke-width="3"/>
<circle cx="984.60" cy="1207.50" r="4" fill="#fff" stroke="#4a7ff0" stroke-width="3"/>
<circle cx="1101.10" cy="1207.50" r="4" fill="#fff" stroke="#4a7ff0" stroke-width="3"/>
<circle cx="1217.60" cy="1207.50" r="4" fill="#fff" stroke="#4a7ff0" stroke-width="3"/>
<circle cx="1334.10" cy="1207.50" r="4" fill="#fff" stroke="#4a7ff0" stroke-width="3"/>
<circle cx="1450.60" cy="1207.50" r="4" fill="#fff" stroke="#4a7ff0" stroke-width="3"/>
<circle cx="1567.10" cy="1207.50" r="4" fill="#fff" stroke="#4a7ff0" stroke-width="3"/>
<circle cx="1683.60" cy="1207.50" r="4" fill="#fff" stroke="#4a7ff0" stroke-width="3"/>
<circle cx="635.10" cy="1206.73" r="4" fill="#fff" stroke="#4cb27e" stroke-width="3"/>
<circle cx="751.60" cy="1200.53" r="4" fill="#fff" stroke="#4cb27e" stroke-width="3"/>
<circle cx="868.10" cy="1109.94" r="4" fill="#fff" stroke="#4cb27e" stroke-width="3"/>
<circle cx="984.60" cy="1158.33" r="4" fill="#fff" stroke="#4cb27e" stroke-width="3"/>
<circle cx="1101.10" cy="1160.66" r="4" fill="#fff" stroke="#4cb27e" stroke-width="3"/>
<circle cx="1217.60" cy="991.47" r="4" fill="#fff" stroke="#4cb27e" stroke-width="3"/>
<circle cx="1334.10" cy="972.89" r="4" fill="#fff" stroke="#4cb27e" stroke-width="3"/>
<circle cx="1450.60" cy="999.22" r="4" fill="#fff" stroke="#4cb27e" stroke-width="3"/>
<circle cx="1567.10" cy="992.64" r="4" fill="#fff" stroke="#4cb27e" stroke-width="3"/>
<circle cx="1683.60" cy="1196.66" r="4" fill="#fff" stroke="#4cb27e" stroke-width="3"/>
<circle cx="635.10" cy="1207.50" r="4" fill="#fff" stroke="#e05252" stroke-width="3"/>
<circle cx="751.60" cy="1207.50" r="4" fill="#fff" stroke="#e05252" stroke-width="3"/>
<circle cx="868.10" cy="1207.50" r="4" fill="#fff" stroke="#e05252" stroke-width="3"/>
<circle cx="984.60" cy="1207.50" r="4" fill="#fff" stroke="#e05252" stroke-width="3"/>
<circle cx="1101.10" cy="1207.50" r="4" fill="#fff" stroke="#e05252" stroke-width="3"/>
<circle cx="1217.60" cy="1207.50" r="4" fill="#fff" stroke="#e05252" stroke-width="3"/>
<circle cx="1334.10" cy="1206.34" r="4" fill="#fff" stroke="#e05252" stroke-width="3"/>
<circle cx="1450.60" cy="1188.92" r="4" fill="#fff" stroke="#e05252" stroke-width="3"/>
<circle cx="1567.10" cy="1192.79" r="4" fill="#fff" stroke="#e05252" stroke-width="3"/>
<circle cx="1683.60" cy="1207.50" r="4" fill="#fff" stroke="#e05252" stroke-width="3"/>
<circle cx="635.10" cy="1207.50" r="4" fill="#fff" stroke="#6b7280" stroke-width="3"/>
<circle cx="751.60" cy="1207.50" r="4" fill="#fff" stroke="#6b7280" stroke-width="3"/>
<circle cx="868.10" cy="1207.50" r="4" fill="#fff" stroke="#6b7280" stroke-width="3"/>
<circle cx="984.60" cy="1207.50" r="4" fill="#fff" stroke="#6b7280" stroke-width="3"/>
<circle cx="1101.10" cy="1207.50" r="4" fill="#fff" stroke="#6b7280" stroke-width="3"/>
<circle cx="1217.60" cy="1207.50" r="4" fill="#fff" stroke="#6b7280" stroke-width="3"/>
<circle cx="1334.10" cy="1207.50" r="4" fill="#fff" stroke="#6b7280" stroke-width="3"/>
<circle cx="1450.60" cy="1203.63" r="4" fill="#fff" stroke="#6b7280" stroke-width="3"/>
<circle cx="1567.10" cy="1204.02" r="4" fill="#fff" stroke="#6b7280" stroke-width="3"/>
<circle cx="1683.60" cy="1207.50" r="4" fill="#fff" stroke="#6b7280" stroke-width="3"/>
<line x1="807.5" y1="902.8" x2="857.5" y2="902.8" stroke="#4a7ff0" stroke-width="3.2"/>
<circle cx="832.5" cy="902.8" r="10.6" fill="#fff" stroke="#4a7ff0" stroke-width="3.2"/>
<text x="867.5" y="911.3" font-family="Liberation Sans" font-size="24" fill="#30353f">running</text>
<line x1="969.8" y1="902.8" x2="1019.8" y2="902.8" stroke="#4cb27e" stroke-width="3.2"/>
<circle cx="994.8" cy="902.8" r="10.6" fill="#fff" stroke="#4cb27e" stroke-width="3.2"/>
<text x="1029.8" y="911.3" font-family="Liberation Sans" font-size="24" fill="#30353f">succeeded</text>
<line x1="1168.2" y1="902.8" x2="1218.2" y2="902.8" stroke="#e05252" stroke-width="3.2"/>
<circle cx="1193.2" cy="902.8" r="10.6" fill="#fff" stroke="#e05252" stroke-width="3.2"/>
<text x="1228.2" y="911.3" font-family="Liberation Sans" font-size="24" fill="#30353f">failed</text>
<line x1="1307.9" y1="902.8" x2="1357.9" y2="902.8" stroke="#6b7280" stroke-width="3.2"/>
<circle cx="1332.9" cy="902.8" r="10.6" fill="#fff" stroke="#6b7280" stroke-width="3.2"/>
<text x="1367.9" y="911.3" font-family="Liberation Sans" font-size="24" fill="#30353f">cancelled</text>
<defs><clipPath id="clip2"><rect x="1763" y="800" width="1184" height="600"/></clipPath></defs>
<line x1="1852.8" y1="1207.20" x2="2857.9" y2="1207.20" stroke="#e4e6ee" stroke-width="2"/>
<text x="1836.3" y="1207.20" dy="8.5" text-anchor="end" font-size="24" fill="#404754" font-family="Liberation Sans">0</text>
<line x1="1852.8" y1="1146.80" x2="2857.9" y2="1146.80" stroke="#e4e6ee" stroke-width="2"/>
<text x="1836.3" y="1146.80" dy="8.5" text-anchor="end" font-size="24" fill="#404754" font-family="Liberation Sans">100</text>
<line x1="1852.8" y1="1086.30" x2="2857.9" y2="1086.30" stroke="#e4e6ee" stroke-width="2"/>
<text x="1836.3" y="1086.30" dy="8.5" text-anchor="end" font-size="24" fill="#404754" font-family="Liberation Sans">200</text>
<line x1="1852.8" y1="1024.60" x2="2857.9" y2="1024.60" stroke="#e4e6ee" stroke-width="2"/>
<text x="1836.3" y="1024.60" dy="8.5" text-anchor="end" font-size="24" fill="#404754" font-family="Liberation Sans">300</text>
<line x1="1852.8" y1="964.70" x2="2857.9" y2="964.70" stroke="#e4e6ee" stroke-width="2"/>
<text x="1836.3" y="964.70" dy="8.5" text-anchor="end" font-size="24" fill="#404754" font-family="Liberation Sans">400</text>
<line x1="1852.80" y1="1208.2" x2="1852.80" y2="1217.2" stroke="#e6e6e6" stroke-width="2"/>
<line x1="1964.48" y1="1208.2" x2="1964.48" y2="1217.2" stroke="#e6e6e6" stroke-width="2"/>
<line x1="2076.16" y1="1208.2" x2="2076.16" y2="1217.2" stroke="#e6e6e6" stroke-width="2"/>
<line x1="2187.83" y1="1208.2" x2="2187.83" y2="1217.2" stroke="#e6e6e6" stroke-width="2"/>
<line x1="2299.51" y1="1208.2" x2="2299.51" y2="1217.2" stroke="#e6e6e6" stroke-width="2"/>
<line x1="2411.19" y1="1208.2" x2="2411.19" y2="1217.2" stroke="#e6e6e6" stroke-width="2"/>
<line x1="2522.87" y1="1208.2" x2="2522.87" y2="1217.2" stroke="#e6e6e6" stroke-width="2"/>
<line x1="2634.54" y1="1208.2" x2="2634.54" y2="1217.2" stroke="#e6e6e6" stroke-width="2"/>
<line x1="2746.22" y1="1208.2" x2="2746.22" y2="1217.2" stroke="#e6e6e6" stroke-width="2"/>
<line x1="2857.90" y1="1208.2" x2="2857.90" y2="1217.2" stroke="#e6e6e6" stroke-width="2"/>
<g clip-path="url(#clip2)" font-family="Liberation Sans" font-size="20" fill="#404754">
<text transform="translate(1852.80,1223.2) rotate(-45)" text-anchor="end" dy="7">2026-01-12 13:00</text>
<text transform="translate(1964.48,1223.2) rotate(-45)" text-anchor="end" dy="7">2026-01-12 14:00</text>
<text transform="translate(2076.16,1223.2) rotate(-45)" text-anchor="end" dy="7">2026-01-12 15:00</text>
<text transform="translate(2187.83,1223.2) rotate(-45)" text-anchor="end" dy="7">2026-01-12 16:00</text>
<text transform="translate(2299.51,1223.2) rotate(-45)" text-anchor="end" dy="7">2026-01-12 17:00</text>
<text transform="translate(2411.19,1223.2) rotate(-45)" text-anchor="end" dy="7">2026-01-12 18:00</text>
<text transform="translate(2522.87,1223.2) rotate(-45)" text-anchor="end" dy="7">2026-01-12 19:00</text>
<text transform="translate(2634.54,1223.2) rotate(-45)" text-anchor="end" dy="7">2026-01-12 20:00</text>
<text transform="translate(2746.22,1223.2) rotate(-45)" text-anchor="end" dy="7">2026-01-12 21:00</text>
<text transform="translate(2857.90,1223.2) rotate(-45)" text-anchor="end" dy="7">2026-01-12 22:00*</text>
</g>
<path d="M1852.80 1207.20 C1852.80 1207.20 1939.91 1207.20 1964.48 1207.20 C1989.05 1207.20 2051.59 1207.20 2076.16 1207.20 C2100.72 1207.20 2163.26 1207.20 2187.83 1207.20 C2212.40 1207.20 2274.94 1207.20 2299.51 1207.20 C2324.08 1207.20 2386.62 1207.20 2411.19 1207.20 C2435.76 1207.20 2498.30 1207.20 2522.87 1207.20 C2547.44 1207.20 2609.98 1207.20 2634.54 1207.20 C2659.11 1207.20 2721.65 1207.20 2746.22 1207.20 C2770.79 1207.20 2857.90 1207.20 2857.90 1207.20" fill="none" stroke="#4a7ff0" stroke-width="3.5" stroke-linejoin="round"/>
<path d="M1852.80 1207.20 C1852.80 1207.20 1942.17 1207.20 1964.48 1207.20 C1991.31 1207.20 2049.89 1132.63 2076.16 1132.63 C2099.02 1132.63 2162.71 1164.65 2187.83 1167.19 C2211.84 1169.61 2282.00 1169.61 2299.51 1169.61 C2331.13 1169.61 2379.73 1028.07 2411.19 1001.68 C2428.87 986.85 2498.13 982.28 2522.87 982.28 C2547.26 982.28 2609.98 987.13 2634.54 987.13 C2659.11 987.13 2730.67 982.28 2746.22 982.28 C2779.81 982.28 2857.90 1196.29 2857.90 1196.29" fill="none" stroke="#4cb27e" stroke-width="3.5" stroke-linejoin="round"/>
<path d="M1852.80 1204.17 C1852.80 1204.17 1941.56 1199.82 1964.48 1192.04 C1990.70 1183.15 2050.64 1128.39 2076.16 1128.39 C2099.78 1128.39 2162.48 1168.32 2187.83 1169.61 C2211.62 1170.83 2278.37 1170.83 2299.51 1170.83 C2327.51 1170.83 2383.27 1087.54 2411.19 1073.83 C2432.41 1063.40 2498.22 1061.09 2522.87 1061.09 C2547.36 1061.09 2609.97 1063.52 2634.54 1063.52 C2659.11 1063.52 2727.10 1063.52 2746.22 1063.52 C2776.24 1063.52 2857.90 1198.71 2857.90 1198.71" fill="none" stroke="#8b5cf6" stroke-width="3.5" stroke-linejoin="round"/>
<path d="M1852.80 1207.20 C1852.80 1207.20 1939.91 1207.20 1964.48 1207.20 C1989.05 1207.20 2051.59 1207.20 2076.16 1207.20 C2100.72 1207.20 2163.26 1207.20 2187.83 1207.20 C2212.40 1207.20 2274.94 1207.20 2299.51 1207.20 C2324.08 1207.20 2386.62 1207.20 2411.19 1207.20 C2435.76 1207.20 2498.30 1207.20 2522.87 1207.20 C2547.44 1207.20 2609.98 1207.20 2634.54 1207.20 C2659.11 1207.20 2721.65 1207.20 2746.22 1207.20 C2770.79 1207.20 2857.90 1207.20 2857.90 1207.20" fill="none" stroke="#f0a030" stroke-width="3.5" stroke-linejoin="round"/>
<path d="M1852.80 1207.20 C1852.80 1207.20 1939.91 1207.20 1964.48 1207.20 C1989.05 1207.20 2051.59 1207.20 2076.16 1207.20 C2100.72 1207.20 2163.26 1207.20 2187.83 1207.20 C2212.40 1207.20 2274.94 1207.20 2299.51 1207.20 C2324.08 1207.20 2386.62 1207.20 2411.19 1207.20 C2435.76 1207.20 2498.30 1207.20 2522.87 1207.20 C2547.44 1207.20 2609.98 1207.20 2634.54 1207.20 C2659.11 1207.20 2721.65 1207.20 2746.22 1207.20 C2770.79 1207.20 2857.90 1207.20 2857.90 1207.20" fill="none" stroke="#e0558f" stroke-width="3.5" stroke-linejoin="round"/>
<path d="M1852.80 1207.20 C1852.80 1207.20 1939.91 1207.20 1964.48 1207.20 C1989.05 1207.20 2051.59 1207.20 2076.16 1207.20 C2100.72 1207.20 2163.26 1207.20 2187.83 1207.20 C2212.40 1207.20 2274.94 1207.20 2299.51 1207.20 C2324.08 1207.20 2386.62 1207.20 2411.19 1207.20 C2435.76 1207.20 2498.30 1207.20 2522.87 1207.20 C2547.44 1207.20 2609.98 1207.20 2634.54 1207.20 C2659.11 1207.20 2721.65 1207.20 2746.22 1207.20 C2770.79 1207.20 2857.90 1207.20 2857.90 1207.20" fill="none" stroke="#4cb4d8" stroke-width="3.5" stroke-linejoin="round"/>
<circle cx="1852.80" cy="1207.20" r="4" fill="#fff" stroke="#4a7ff0" stroke-width="3"/>
<circle cx="1964.48" cy="1207.20" r="4" fill="#fff" stroke="#4a7ff0" stroke-width="3"/>
<circle cx="2076.16" cy="1207.20" r="4" fill="#fff" stroke="#4a7ff0" stroke-width="3"/>
<circle cx="2187.83" cy="1207.20" r="4" fill="#fff" stroke="#4a7ff0" stroke-width="3"/>
<circle cx="2299.51" cy="1207.20" r="4" fill="#fff" stroke="#4a7ff0" stroke-width="3"/>
<circle cx="2411.19" cy="1207.20" r="4" fill="#fff" stroke="#4a7ff0" stroke-width="3"/>
<circle cx="2522.87" cy="1207.20" r="4" fill="#fff" stroke="#4a7ff0" stroke-width="3"/>
<circle cx="2634.54" cy="1207.20" r="4" fill="#fff" stroke="#4a7ff0" stroke-width="3"/>
<circle cx="2746.22" cy="1207.20" r="4" fill="#fff" stroke="#4a7ff0" stroke-width="3"/>
<circle cx="2857.90" cy="1207.20" r="4" fill="#fff" stroke="#4a7ff0" stroke-width="3"/>
<circle cx="1852.80" cy="1207.20" r="4" fill="#fff" stroke="#4cb27e" stroke-width="3"/>
<circle cx="1964.48" cy="1207.20" r="4" fill="#fff" stroke="#4cb27e" stroke-width="3"/>
<circle cx="2076.16" cy="1132.63" r="4" fill="#fff" stroke="#4cb27e" stroke-width="3"/>
<circle cx="2187.83" cy="1167.19" r="4" fill="#fff" stroke="#4cb27e" stroke-width="3"/>
<circle cx="2299.51" cy="1169.61" r="4" fill="#fff" stroke="#4cb27e" stroke-width="3"/>
<circle cx="2411.19" cy="1001.68" r="4" fill="#fff" stroke="#4cb27e" stroke-width="3"/>
<circle cx="2522.87" cy="982.28" r="4" fill="#fff" stroke="#4cb27e" stroke-width="3"/>
<circle cx="2634.54" cy="987.13" r="4" fill="#fff" stroke="#4cb27e" stroke-width="3"/>
<circle cx="2746.22" cy="982.28" r="4" fill="#fff" stroke="#4cb27e" stroke-width="3"/>
<circle cx="2857.90" cy="1196.29" r="4" fill="#fff" stroke="#4cb27e" stroke-width="3"/>
<circle cx="1852.80" cy="1204.17" r="4" fill="#fff" stroke="#8b5cf6" stroke-width="3"/>
<circle cx="1964.48" cy="1192.04" r="4" fill="#fff" stroke="#8b5cf6" stroke-width="3"/>
<circle cx="2076.16" cy="1128.39" r="4" fill="#fff" stroke="#8b5cf6" stroke-width="3"/>
<circle cx="2187.83" cy="1169.61" r="4" fill="#fff" stroke="#8b5cf6" stroke-width="3"/>
<circle cx="2299.51" cy="1170.83" r="4" fill="#fff" stroke="#8b5cf6" stroke-width="3"/>
<circle cx="2411.19" cy="1073.83" r="4" fill="#fff" stroke="#8b5cf6" stroke-width="3"/>
<circle cx="2522.87" cy="1061.09" r="4" fill="#fff" stroke="#8b5cf6" stroke-width="3"/>
<circle cx="2634.54" cy="1063.52" r="4" fill="#fff" stroke="#8b5cf6" stroke-width="3"/>
<circle cx="2746.22" cy="1063.52" r="4" fill="#fff" stroke="#8b5cf6" stroke-width="3"/>
<circle cx="2857.90" cy="1198.71" r="4" fill="#fff" stroke="#8b5cf6" stroke-width="3"/>
<circle cx="1852.80" cy="1207.20" r="4" fill="#fff" stroke="#f0a030" stroke-width="3"/>
<circle cx="1964.48" cy="1207.20" r="4" fill="#fff" stroke="#f0a030" stroke-width="3"/>
<circle cx="2076.16" cy="1207.20" r="4" fill="#fff" stroke="#f0a030" stroke-width="3"/>
<circle cx="2187.83" cy="1207.20" r="4" fill="#fff" stroke="#f0a030" stroke-width="3"/>
<circle cx="2299.51" cy="1207.20" r="4" fill="#fff" stroke="#f0a030" stroke-width="3"/>
<circle cx="2411.19" cy="1207.20" r="4" fill="#fff" stroke="#f0a030" stroke-width="3"/>
<circle cx="2522.87" cy="1207.20" r="4" fill="#fff" stroke="#f0a030" stroke-width="3"/>
<circle cx="2634.54" cy="1207.20" r="4" fill="#fff" stroke="#f0a030" stroke-width="3"/>
<circle cx="2746.22" cy="1207.20" r="4" fill="#fff" stroke="#f0a030" stroke-width="3"/>
<circle cx="2857.90" cy="1207.20" r="4" fill="#fff" stroke="#f0a030" stroke-width="3"/>
<circle cx="1852.80" cy="1207.20" r="4" fill="#fff" stroke="#e0558f" stroke-width="3"/>
<circle cx="1964.48" cy="1207.20" r="4" fill="#fff" stroke="#e0558f" stroke-width="3"/>
<circle cx="2076.16" cy="1207.20" r="4" fill="#fff" stroke="#e0558f" stroke-width="3"/>
<circle cx="2187.83" cy="1207.20" r="4" fill="#fff" stroke="#e0558f" stroke-width="3"/>
<circle cx="2299.51" cy="1207.20" r="4" fill="#fff" stroke="#e0558f" stroke-width="3"/>
<circle cx="2411.19" cy="1207.20" r="4" fill="#fff" stroke="#e0558f" stroke-width="3"/>
<circle cx="2522.87" cy="1207.20" r="4" fill="#fff" stroke="#e0558f" stroke-width="3"/>
<circle cx="2634.54" cy="1207.20" r="4" fill="#fff" stroke="#e0558f" stroke-width="3"/>
<circle cx="2746.22" cy="1207.20" r="4" fill="#fff" stroke="#e0558f" stroke-width="3"/>
<circle cx="2857.90" cy="1207.20" r="4" fill="#fff" stroke="#e0558f" stroke-width="3"/>
<circle cx="1852.80" cy="1207.20" r="4" fill="#fff" stroke="#4cb4d8" stroke-width="3"/>
<circle cx="1964.48" cy="1207.20" r="4" fill="#fff" stroke="#4cb4d8" stroke-width="3"/>
<circle cx="2076.16" cy="1207.20" r="4" fill="#fff" stroke="#4cb4d8" stroke-width="3"/>
<circle cx="2187.83" cy="1207.20" r="4" fill="#fff" stroke="#4cb4d8" stroke-width="3"/>
<circle cx="2299.51" cy="1207.20" r="4" fill="#fff" stroke="#4cb4d8" stroke-width="3"/>
<circle cx="2411.19" cy="1207.20" r="4" fill="#fff" stroke="#4cb4d8" stroke-width="3"/>
<circle cx="2522.87" cy="1207.20" r="4" fill="#fff" stroke="#4cb4d8" stroke-width="3"/>
<circle cx="2634.54" cy="1207.20" r="4" fill="#fff" stroke="#4cb4d8" stroke-width="3"/>
<circle cx="2746.22" cy="1207.20" r="4" fill="#fff" stroke="#4cb4d8" stroke-width="3"/>
<circle cx="2857.90" cy="1207.20" r="4" fill="#fff" stroke="#4cb4d8" stroke-width="3"/>
<line x1="1943.5" y1="922.2" x2="1993.5" y2="922.2" stroke="#4a7ff0" stroke-width="3.2"/>
<circle cx="1968.5" cy="922.2" r="10.6" fill="#fff" stroke="#4a7ff0" stroke-width="3.2"/>
<text x="2003.5" y="930.7" font-family="Liberation Sans" font-size="24" fill="#30353f">call</text>
<line x1="2061.8" y1="922.2" x2="2111.8" y2="922.2" stroke="#4cb27e" stroke-width="3.2"/>
<circle cx="2086.8" cy="922.2" r="10.6" fill="#fff" stroke="#4cb27e" stroke-width="3.2"/>
<text x="2121.8" y="930.7" font-family="Liberation Sans" font-size="24" fill="#30353f">event</text>
<line x1="2202.8" y1="922.2" x2="2252.8" y2="922.2" stroke="#8b5cf6" stroke-width="3.2"/>
<circle cx="2227.8" cy="922.2" r="10.6" fill="#fff" stroke="#8b5cf6" stroke-width="3.2"/>
<text x="2262.8" y="930.7" font-family="Liberation Sans" font-size="24" fill="#30353f">schedule</text>
<line x1="2381.2" y1="922.2" x2="2431.2" y2="922.2" stroke="#f0a030" stroke-width="3.2"/>
<circle cx="2406.2" cy="922.2" r="10.6" fill="#fff" stroke="#f0a030" stroke-width="3.2"/>
<text x="2441.2" y="930.7" font-family="Liberation Sans" font-size="24" fill="#30353f">run</text>
<line x1="2498.1" y1="922.2" x2="2548.1" y2="922.2" stroke="#e0558f" stroke-width="3.2"/>
<circle cx="2523.1" cy="922.2" r="10.6" fill="#fff" stroke="#e0558f" stroke-width="3.2"/>
<text x="2558.1" y="930.7" font-family="Liberation Sans" font-size="24" fill="#30353f">eval</text>
<line x1="2624.5" y1="922.2" x2="2674.5" y2="922.2" stroke="#4cb4d8" stroke-width="3.2"/>
<circle cx="2649.5" cy="922.2" r="10.6" fill="#fff" stroke="#4cb4d8" stroke-width="3.2"/>
<text x="2684.5" y="930.7" font-family="Liberation Sans" font-size="24" fill="#30353f">repl</text>
<path d="M0 1688 V1710 H22 A22 22 0 0 1 0 1688 Z" fill="#141414"/>
<path d="M3010 1702 V1710 H2998 A22 22 0 0 0 3010 1702 Z" fill="#141414"/>
</svg>
</body></html>
